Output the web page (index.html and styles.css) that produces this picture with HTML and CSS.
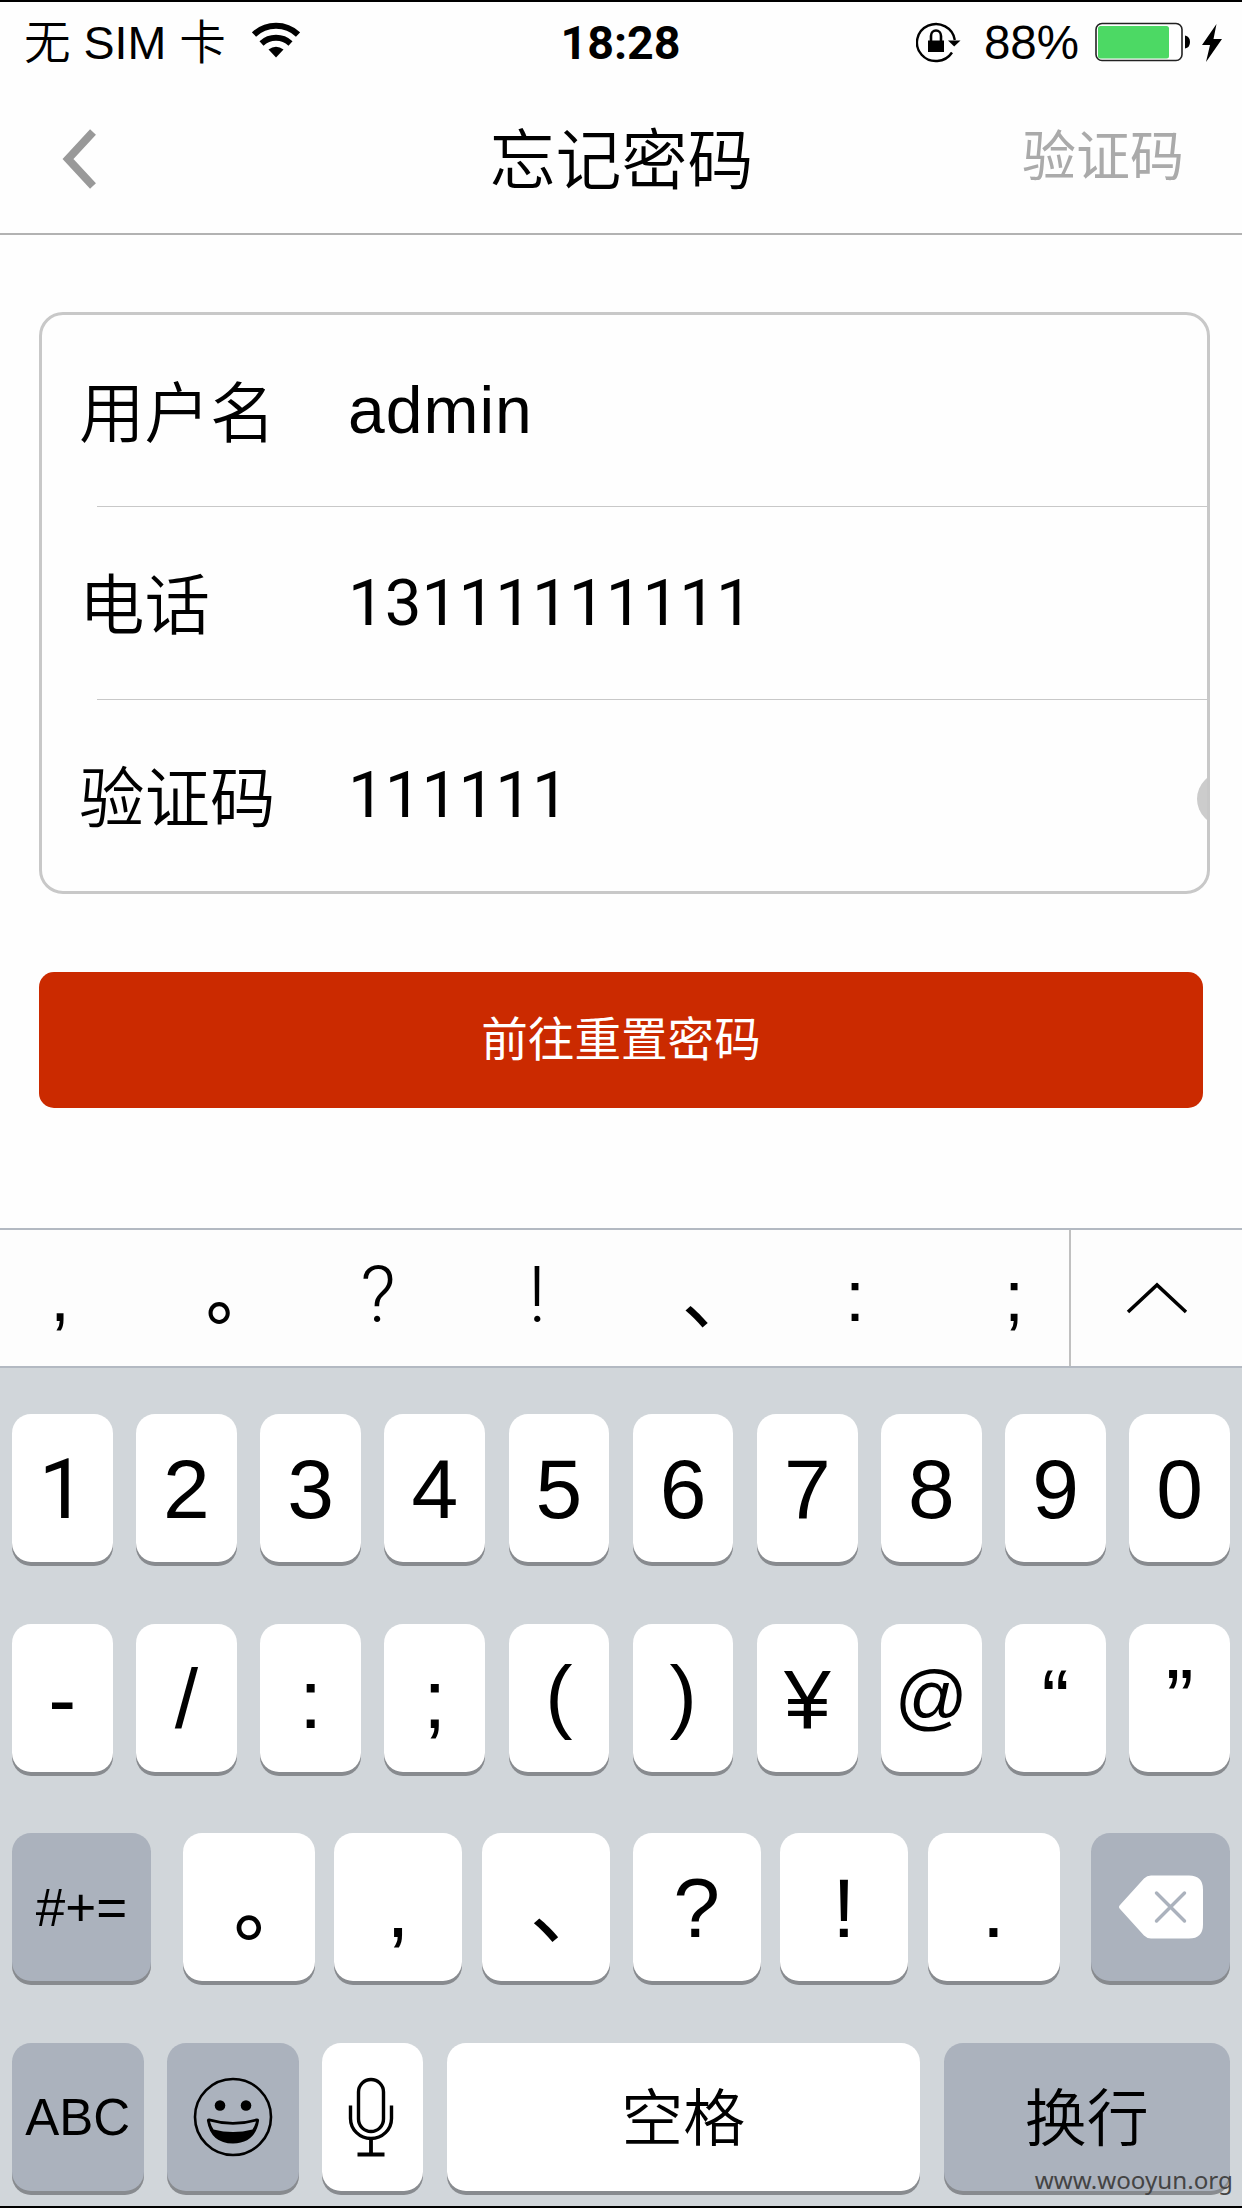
FILE: index.html
```html
<!DOCTYPE html>
<html lang="zh-CN">
<head>
<meta charset="utf-8">
<title>忘记密码</title>
<link rel="stylesheet" href="styles.css">
</head>
<body>
<div class="screen">
  <div class="status">
    <div class="status-left">
      <span>无 SIM 卡</span>
      <svg class="wifi" width="48" height="36" viewBox="0 0 48 36" fill="none" stroke="#000">
        <path d="M2 12.5a32 32 0 0 1 44 0" stroke-width="6"/>
        <path d="M9.5 21.5a21.5 21.5 0 0 1 29 0" stroke-width="6"/>
        <path d="M24 35.5l-7.5-8q7.500-5.500 15 0z" fill="#000" stroke="none"/>
      </svg>
    </div>
    <div class="time">18:28</div>
    <div class="status-right">
      <svg class="lock" width="46" height="42" viewBox="0 0 46 42">
        <path d="M36 31.500A19 18.500 0 1 1 38.800 19" fill="none" stroke="#000" stroke-width="2.400"/>
        <path d="M32 19.500h12.500l-6.300 6z"/>
        <path d="M12 19.500h16V31H12z"/>
        <path d="M15 20v-5a5 5.500 0 0 1 10 0v5" fill="none" stroke="#000" stroke-width="2.600"/>
      </svg>
      <span class="percent">88%</span>
      <svg class="battery" width="96" height="40" viewBox="0 0 96 40">
        <rect x="1" y="1.500" width="86" height="37" rx="6" fill="#fff" stroke="#222" stroke-width="1.600"/>
        <rect x="3" y="4" width="71" height="32.500" rx="2.500" fill="#4cd964"/>
        <path d="M90 13.500q5 1 5 6.500t-5 6.500z"/>
      </svg>
      <svg class="bolt" width="22" height="40" viewBox="0 0 22 40"><path d="M15.500 1L1 22h8L5 39 21 16h-8.500z"/></svg>
    </div>
  </div>
  <div class="nav">
    <svg class="back" width="38" height="62" viewBox="0 0 38 62"><path d="M32 4L7 31l25 27" fill="none" stroke="#999" stroke-width="8"/></svg>
    <h1 class="title">忘记密码</h1>
    <span class="nav-action">验证码</span>
  </div>
  <div class="content">
    <div class="form">
      <div class="row"><span class="label">用户名</span><span class="value name">admin</span></div>
      <div class="divider"></div>
      <div class="row"><span class="label">电话</span><span class="value digits">13111111111</span></div>
      <div class="divider"></div>
      <div class="row"><span class="label">验证码</span><span class="value digits">111111</span><i class="clear"></i></div>
    </div>
    <div class="submit">前往重置密码</div>
  </div>
  <div class="candidates">
    <div class="marks">
      <span>,</span><span><b class="cjk stop">。</b></span><span class="thin">?</span><span class="thin">!</span><span><b class="cjk">、</b></span><span>:</span><span>;</span>
    </div>
    <div class="expand"><svg width="62" height="34" viewBox="0 0 62 34"><path d="M2 31L31 4l29 27" fill="none" stroke="#000" stroke-width="3.500"/></svg></div>
  </div>
  <div class="keyboard">
    <div class="keys ten">
      <div class="key one">1</div><div class="key">2</div><div class="key">3</div><div class="key">4</div><div class="key">5</div><div class="key">6</div><div class="key">7</div><div class="key">8</div><div class="key">9</div><div class="key">0</div>
    </div>
    <div class="keys ten">
      <div class="key">-</div><div class="key">/</div><div class="key">:</div><div class="key">;</div><div class="key paren">(</div><div class="key paren">)</div><div class="key">¥</div><div class="key at">@</div><div class="key">“</div><div class="key">”</div>
    </div>
    <div class="keys punct">
      <div class="key gray symbols">#+=</div>
      <div class="group">
        <div class="key edge"><b class="cjk stop">。</b></div><div class="key">,</div><div class="key"><b class="cjk">、</b></div>
      </div>
      <div class="group">
        <div class="key">?</div><div class="key">!</div><div class="key edge">.</div>
      </div>
      <div class="key gray icon">
        <svg width="86" height="64" viewBox="0 0 86 64">
          <path d="M33 .5h38q14 0 14 14v35q0 14-14 14H33q-4 0-7-3L2 34q-2-2 0-4L26 3.500q3-3 7-3z" fill="#fff"/>
          <path d="M38.500 18l28 28m0-28l-28 28" stroke="#abb2bd" stroke-width="3.400" stroke-linecap="round"/>
        </svg>
      </div>
    </div>
    <div class="keys bottom">
      <div class="key gray abc">ABC</div>
      <div class="key gray icon">
        <svg width="80" height="82" viewBox="0 0 80 82">
          <ellipse cx="40" cy="41" rx="38" ry="38" fill="none" stroke="#000" stroke-width="2.600"/>
          <circle cx="27" cy="29.500" r="5.300"/><circle cx="53" cy="29.500" r="5.300"/>
          <path d="M14 45q-.5-3 2.500-2.500 23.500 7 47 0 3-.5 2.500 2.500-4 22.500-26 22.500T14 45z"/>
          <path d="M17 45.500q23 6.500 46 0-1 4-3.500 8-19.500 5-39 0-2.500-4-3.500-8z" fill="#abb2bd"/>
        </svg>
      </div>
      <div class="key icon">
        <svg class="mic" width="46" height="80" viewBox="0 0 46 80" fill="none" stroke="#000" stroke-width="3.400">
          <rect x="10.500" y="2.500" width="25" height="52" rx="12.500"/>
          <path d="M2.500 28.500v13a20.500 20 0 0 0 41 0v-13"/>
          <path d="M23 61v15M9.500 77.500h27" stroke-width="3.800"/>
        </svg>
      </div>
      <div class="key word">空格</div>
      <div class="key gray word">换行</div>
    </div>
  </div>
  <div class="watermark">www.wooyun.org</div>
</div>
</body>
</html>
```
FILE: styles.css
```css
* { box-sizing: border-box; }
body { margin: 0; background: #fefefe; }
svg { display: block; flex: none; }
.screen {
  position: relative;
  width: 1242px; height: 2208px;
  display: flex; flex-direction: column;
  overflow: hidden;
  border-top: 2px solid #000; border-bottom: 2px solid #000;
  background: #fefefe; color: #000;
  font-family: "Liberation Sans", "Noto Sans CJK SC", sans-serif;
  font-kerning: none;
  white-space: nowrap;
}
.status {
  height: 82px; flex: none;
  display: grid; grid-template-columns: 1fr auto 1fr; align-items: center;
  padding: 0 19px 0 24px;
  font-size: 46.6px; line-height: 82px; font-weight: 350;
}
.status-left, .status-right { display: flex; align-items: center; }
.status-right { justify-content: flex-end; }
.wifi { margin: -6px 0 0 26px; }
.time { padding-right: 6px; font-family: Roboto, sans-serif; font-weight: 700; font-size: 46.6px; }
.lock { margin: -2px 22px 0 0; }
.percent { margin-right: 16px; font-size: 47.5px; }
.battery { margin: -3px 10px 0 0; }
.bolt { margin-top: -1px; }
.nav {
  height: 151px; flex: none;
  display: grid; grid-template-columns: 1fr auto 1fr; align-items: center;
  padding: 0 58px 0 61px;
  border-bottom: 2px solid #b2b2b2;
}
.title { margin: 5px 2px 0 0; font-size: 66px; line-height: 80px; font-weight: 350; }
.nav-action { justify-self: end; margin-top: -4px; font-size: 54px; line-height: 80px; font-weight: 400; color: #aaa; }
.content { flex: 1; padding: 77px 32px 0 39px; }
.form {
  width: 1171px; height: 582px;
  display: flex; flex-direction: column;
  border: 3px solid #c8c8c8; border-radius: 24px;
  overflow: hidden;
}
.row { position: relative; flex: 1; display: flex; align-items: center; padding-left: 37px; font-size: 66px; line-height: 90px; }
.label { width: 269px; margin-top: 9px; font-size: 65.500px; font-weight: 350; }
.name { margin-top: -2px; letter-spacing: 1px; }
.digits { font-family: Roboto, sans-serif; font-size: 65.500px; }
.divider { height: 1px; flex: none; margin-left: 55px; background: #c8c8c8; }
.clear { position: absolute; right: -44px; top: 72px; width: 54px; height: 54px; border-radius: 50%; background: #ccc; }
.submit {
  width: 1164px; height: 136px; margin-top: 78px;
  border-radius: 15px;
  background: #cb2a00; color: #fff;
  font-size: 46.6px; line-height: 136px; font-weight: 400; text-align: center;
}
.candidates {
  height: 140px; flex: none;
  display: flex;
  background: #fdfdfd;
  border-top: 2px solid #b3b9c2; border-bottom: 2px solid #b3b9c2;
}
.marks {
  width: 1071px; flex: none;
  display: grid; grid-template-columns: 139.500px repeat(6, 159px);
  border-right: 2px solid #c0c0c0;
  line-height: 132px;
  overflow: hidden;
}
.marks span { display: flex; justify-content: center; font-size: 72px; }
.marks span:first-child { padding-right: 19.500px; }
.marks .thin { font-family: Roboto, sans-serif; font-weight: 300; font-size: 78px; }
.cjk { display: block; width: .38em; font-weight: 400; }
.marks .cjk { font-size: 77px; }
.marks .stop { font-size: 68px; font-weight: 500; line-height: 130px; }
.expand { flex: 1; display: flex; align-items: center; justify-content: center; }
.keyboard {
  height: 838px; flex: none;
  display: flex; flex-direction: column; gap: 61.700px;
  padding: 46px 12px 0;
  background: #d1d6da;
}
.keys { height: 148px; flex: none; display: grid; }
.key {
  display: flex; justify-content: center;
  height: 148px; border-radius: 19px;
  background: #fff; box-shadow: 0 4px 0 #888b8f;
  font-size: 84px; line-height: 151px;
}
.key .stop { font-size: 78px; font-weight: 500; }
.ten { grid-template-columns: repeat(10, 1fr); column-gap: 23.600px; }
.punct { grid-template-columns: 170.500px 450px 458.500px 139px; }
.group { display: flex; gap: 19.500px; }
.group .key { width: 128px; }
.group .edge { width: 132px; }
.bottom { grid-template-columns: 131.500px 131.500px 101px 473.500px 286.500px; justify-content: space-between; }
.gray { background: #abb2bd; }
.icon { align-items: center; }
.mic { margin-right: 3px; }
.one { font-family: Roboto, sans-serif; }
.paren { font-size: 82px; line-height: 142px; }
.at { font-size: 72px; line-height: 144px; }
.symbols { width: 139px; font-size: 53px; line-height: 149px; }
.abc { font-size: 51px; line-height: 149px; }
.word { font-size: 62px; font-weight: 350; line-height: 153px; }
.watermark {
  position: absolute; right: 9px; bottom: 8px;
  color: #444; font: 24.200px/36px "Noto Sans", sans-serif;
}
```
